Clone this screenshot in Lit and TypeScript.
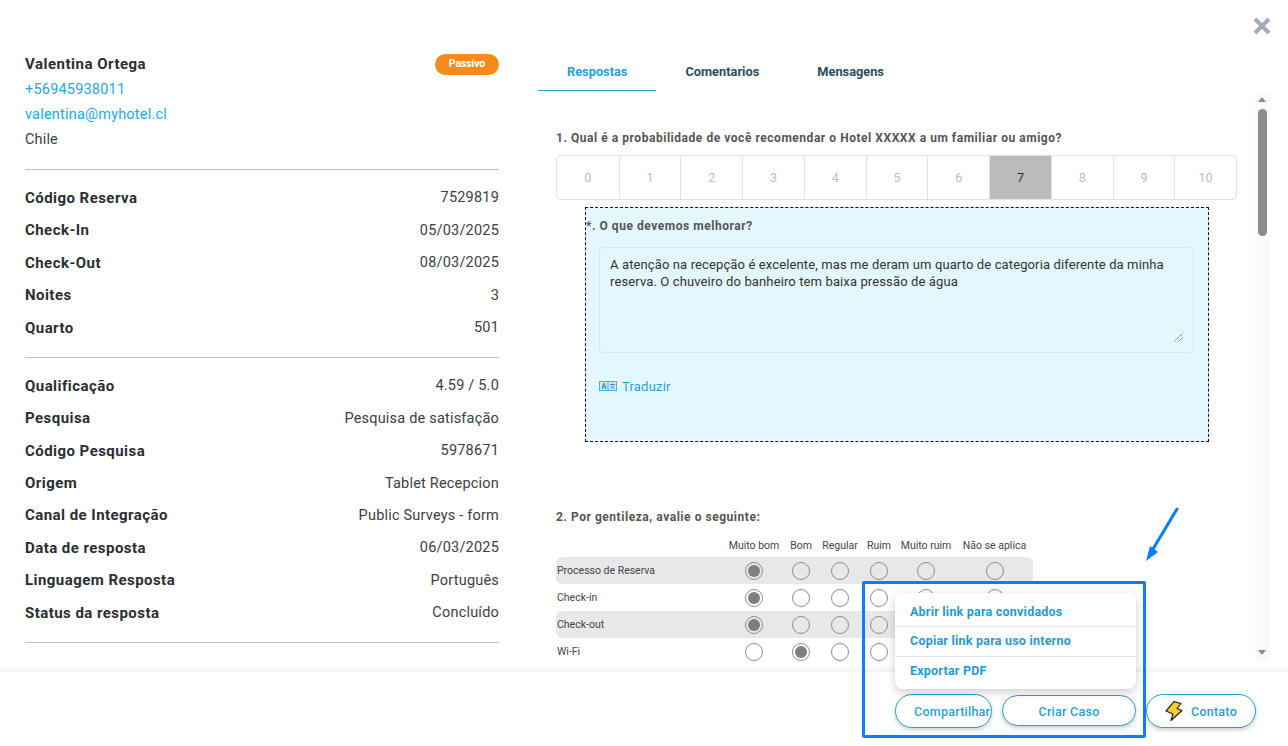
import { LitElement, html, css } from "lit";
import { customElement } from "lit/decorators.js";

const block1 = [["Código Reserva","7529819"],["Check-In","05/03/2025"],["Check-Out","08/03/2025"],["Noites","3"],["Quarto","501"]];
const block2 = [["Qualificação","4.59 / 5.0"],["Pesquisa","Pesquisa de satisfação"],["Código Pesquisa","5978671"],["Origem","Tablet Recepcion"],["Canal de Integração","Public Surveys - form"],["Data de resposta","06/03/2025"],["Linguagem Resposta","Português"],["Status da resposta","Concluído"]];
const cols = ["Muito bom","Bom","Regular","Ruim","Muito ruim","Não se aplica"];
const rows: [string, number, boolean][] = [["Processo de Reserva",0,true],["Check-in",0,false],["Check-out",0,true],["Wi-Fi",1,false]];

@customElement("app-root")
export class AppRoot extends LitElement {
  static styles = css`
    :host { display:block; position:relative; width:1288px; height:746px; overflow:hidden; background:#fff; font-family:Roboto,"Liberation Sans",sans-serif; color:#2a2e33; }
    * { box-sizing:border-box; }
    .main { display:flex; height:672px; overflow:hidden; }
    .left { width:474px; margin-left:25px; padding-top:52px; flex:none; font-size:14.5px; }
    .info { display:flex; flex-direction:column; }
    .line { height:25px; line-height:25px; letter-spacing:.15px; }
    .name { font-weight:700; font-size:15px; color:#2a2e33; letter-spacing:.5px; display:flex; justify-content:space-between; align-items:center; }
    .badge { width:64px; height:21px; margin-top:-1px; border-radius:11px; background:#f58b1c; color:#fff; font-size:10.5px; font-weight:700; line-height:19px; text-align:center; letter-spacing:-.1px; }
    .link { color:#1ea7ec; letter-spacing:.2px; }
    .muted { color:#3c4045; }
    hr { border:0; border-top:1px solid #bdbdbd; margin:0; }
    .h1 { margin-top:17px; }
    .block { padding:11.8px 0 13.2px; }
    .row { height:32.4px; display:flex; justify-content:space-between; align-items:center; }
    .row b { font-weight:700; font-size:15px; letter-spacing:.45px; }
    .row span { color:#3c4045; letter-spacing:.2px; }
    .right { margin-left:39px; flex:1; min-width:0; padding-top:52px; display:flex; flex-direction:column; }
    .tabs { display:flex; height:39px; flex:none; }
    .tab { padding:0 29px; font-size:12.8px; font-weight:700; color:#2e4a5e; line-height:39px; height:39px; }
    .tab.on { color:#2a9fd6; border-bottom:1px solid #2a9fd6; }
    .pane { display:flex; flex:1; min-height:0; margin-top:1px; padding-right:18px; }
    .content { flex:1; min-width:0; overflow:hidden; padding:37px 0 0 18px; }
    .q { font-size:12px; font-weight:700; color:#555; letter-spacing:.54px; line-height:18px; }
    .scale { display:grid; grid-template-columns:repeat(11,1fr); width:681px; height:45px; margin-top:8px; border:1px solid #e2e2e2; border-radius:4px; overflow:hidden; }
    .cell { display:flex; align-items:center; justify-content:center; font-size:12.5px; color:#bdbdbd; border-left:1px solid #e2e2e2; }
    .cell:first-child { border-left:0; }
    .cell.on { background:#bbb; color:#2a2e33; }
    .box { width:624px; height:235px; margin:7px 0 0 29px; border:1px dashed #111; background:#e4f6fe; padding:9px 14px 0 0; }
    .ta { position:relative; height:106px; margin:12px 0 0 13px; border:1px solid #d6e9f3; border-radius:4px; padding:8px 10px; font-size:13px; line-height:17px; color:#333; letter-spacing:.12px; }
    .grip { position:absolute; right:10px; bottom:10px; width:9px; height:9px; }
    .tr { display:flex; align-items:center; gap:5px; margin:23px 0 0 13px; font-size:13px; color:#2a9fd6; letter-spacing:.2px; height:20px; }
    .q2 { margin-top:66px; }
    .matrix { width:477px; margin-top:9px; font-size:10.5px; color:#444; }
    .mrow { display:grid; grid-template-columns:167px 62px 32px 46px 32px 62px 75px; align-items:center; height:27px; }
    .mrow.head { height:20px; margin-bottom:2px; text-align:center; white-space:nowrap; }
    .mrow.shade { background:#e8e8e8; border-radius:6px; }
    .mrow .lab { padding-left:1px; }
    .r { justify-self:center; width:18px; height:18px; border:1px solid #8d8d8d; border-radius:50%; background:#fff; display:flex; align-items:center; justify-content:center; }
    .shade .r { background:#e8e8e8; }
    .r.on::after { content:""; width:12px; height:12px; border-radius:50%; background:#7f7f7f; }
    .sb { position:absolute; left:1255px; top:92px; width:15px; height:570px; background:#fafafa; }
    .thumb { position:absolute; left:3px; top:17px; width:9px; height:127px; border-radius:5px; background:#8c8c8c; }
    .up,.dn { position:absolute; left:3px; width:0; height:0; border-left:4.5px solid transparent; border-right:4.5px solid transparent; }
    .up { top:5px; border-bottom:5px solid #8c8c8c; }
    .dn { bottom:7px; border-top:5px solid #8c8c8c; }
    .close { position:absolute; left:1252px; top:16px; width:20px; height:20px; }
    .footer { position:relative; height:74px; background:#fff; box-shadow:0 -2px 5px rgba(0,0,0,.08); display:flex; justify-content:flex-end; align-items:center; gap:10px; padding:3px 32px 0 0; }
    .btn { height:34px; padding:2px 0 0; border:1px solid #2a9fd6; border-radius:17px; background:#fff; color:#2a9fd6; font-family:inherit; font-size:12.5px; font-weight:500; letter-spacing:.25px; display:flex; align-items:center; justify-content:center; box-shadow:0 2px 4px rgba(0,0,0,.2); white-space:nowrap; }
    .b1 { width:97px; justify-content:flex-start; padding-left:18px; overflow:hidden; }
    .b2 { width:134px; height:31px; }
    .b3 { width:110px; gap:8px; }
    .b3 svg { margin-top:-2px; }
    .menu { position:absolute; left:895px; top:593px; width:241px; height:96px; padding:4px 0 3px; background:#fff; border-radius:8px; box-shadow:0 3px 10px rgba(0,0,0,.2); display:flex; flex-direction:column; }
    .mi { height:30px; display:flex; align-items:center; padding:0 0 2px 15px; font-size:12.5px; font-weight:700; color:#1f9bd4; letter-spacing:.22px; border-top:1px solid #e4e4e4; }
    .mi:first-child { height:29px; padding-bottom:0; border-top:0; }
    .hl { position:absolute; left:862px; top:581px; width:284px; height:157px; border:3px solid #0a7cff; border-radius:2px; pointer-events:none; }
    .arrow { position:absolute; left:1140px; top:503px; width:44px; height:64px; }
  `;

  private row(r: string[]) {
    return html`<div class="row"><b>${r[0]}</b><span>${r[1]}</span></div>`;
  }

  render() {
    return html`
      <div class="main">
        <section class="left">
          <div class="info">
            <div class="line name">Valentina Ortega<div class="badge">Passivo</div></div>
            <div class="line link">+56945938011</div>
            <div class="line link">valentina@myhotel.cl</div>
            <div class="line muted">Chile</div>
          </div>
          <hr class="h1" />
          <div class="block">${block1.map((r) => this.row(r))}</div>
          <hr />
          <div class="block">${block2.map((r) => this.row(r))}</div>
          <hr />
        </section>
        <section class="right">
          <nav class="tabs">
            <div class="tab on">Respostas</div>
            <div class="tab">Comentarios</div>
            <div class="tab">Mensagens</div>
          </nav>
          <div class="pane">
            <div class="content">
              <div class="q">1. Qual é a probabilidade de você recomendar o Hotel XXXXX a um familiar ou amigo?</div>
              <div class="scale">
                ${Array.from({ length: 11 }, (_, i) => html`<div class="cell ${i === 7 ? "on" : ""}">${i}</div>`)}
              </div>
              <div class="box">
                <div class="q">*. O que devemos melhorar?</div>
                <div class="ta">
                  A atenção na recepção é excelente, mas me deram um quarto de categoria diferente da minha reserva. O chuveiro do banheiro tem baixa pressão de água
                  <svg class="grip" viewBox="0 0 9 9"><path d="M8.500.5l-8 8M8.500 4.500l-4 4" stroke="#667" stroke-width="1" stroke-dasharray="1.400 .8" fill="none" /></svg>
                </div>
                <div class="tr">
                  <svg width="18" height="10" viewBox="0 0 18 10">
                    <rect x=".5" y=".5" width="17" height="9" fill="#cdeaf8" stroke="#4aaedd" />
                    <path d="M9 .5v9" stroke="#4aaedd" />
                    <path d="M3 8l1.600-5.500h.8L7 8M3.800 6h2.400" stroke="#2a7fb0" fill="none" />
                    <path d="M11 3.500h5M13.500 2.500v1M11.500 8l3.500-3.500M12 4.500l3.500 3.500" stroke="#2a7fb0" fill="none" stroke-width=".8" />
                  </svg>
                  <span>Traduzir</span>
                </div>
              </div>
              <div class="q q2">2. Por gentileza, avalie o seguinte:</div>
              <div class="matrix">
                <div class="mrow head"><div></div>${cols.map((c) => html`<div>${c}</div>`)}</div>
                ${rows.map(([l, sel, sh]) => html`
                  <div class="mrow ${sh ? "shade" : ""}">
                    <div class="lab">${l}</div>
                    ${cols.map((_, i) => html`<div class="r ${i === sel ? "on" : ""}"></div>`)}
                  </div>`)}
              </div>
            </div>
          </div>
        </section>
      </div>
      <div class="sb"><div class="up"></div><div class="thumb"></div><div class="dn"></div></div>
      <svg class="close" viewBox="0 0 20 20"><path d="M3 3l14 14M17 3 3 17" stroke="#a3abb9" stroke-width="4" fill="none" /></svg>
      <footer class="footer">
        <button class="btn b1">Compartilhar</button>
        <button class="btn b2">Criar Caso</button>
        <button class="btn b3">
          <svg width="18" height="20" viewBox="0 0 18 20"><path d="M9 .7l7 1.800-4 5 5 2L6 19.500 8 13 1 10z" fill="#fbcf33" stroke="#222" stroke-width="1.200" stroke-linejoin="round" /></svg>
          <span>Contato</span>
        </button>
      </footer>
      <div class="menu">
        <div class="mi">Abrir link para convidados</div>
        <div class="mi">Copiar link para uso interno</div>
        <div class="mi">Exportar PDF</div>
      </div>
      <div class="hl"></div>
      <svg class="arrow" viewBox="0 0 44 64"><path d="M37 6 13 46" stroke="#0a7cff" stroke-width="3" stroke-linecap="round" fill="none" /><path d="M6 58 10 43 18 49z" fill="#0a7cff" /></svg>
    `;
  }
}
